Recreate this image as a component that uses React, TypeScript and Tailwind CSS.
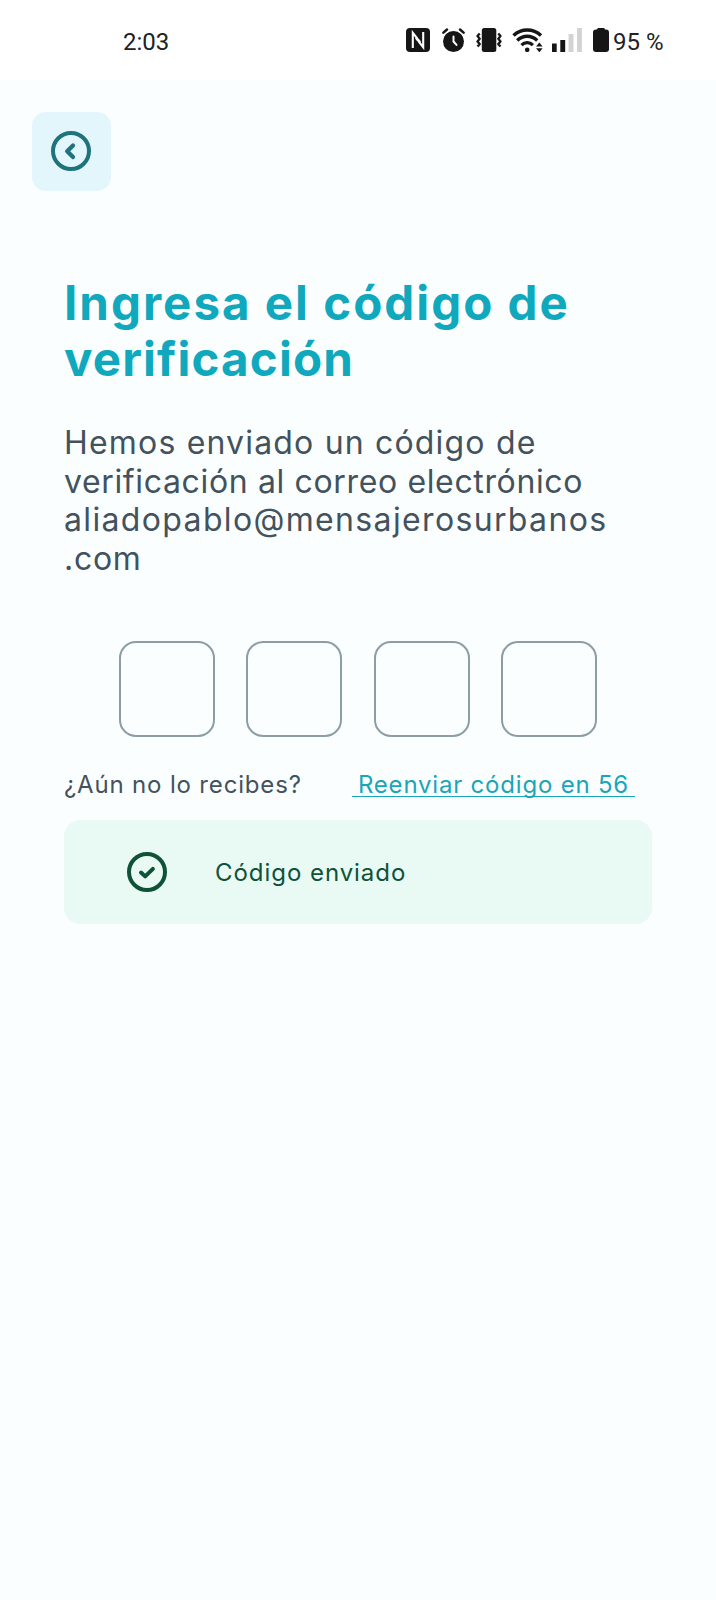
import { useState } from 'react'

const titleLines = [
  { text: 'Ingresa el código de', className: 'tracking-[2px]' },
  { text: 'verificación', className: 'tracking-[1.15px]' },
]

const messageLines = [
  { text: 'Hemos enviado un código de', className: 'tracking-[1.18px]' },
  { text: 'verificación al correo electrónico', className: 'tracking-[0.64px]' },
  { text: 'aliadopablo@mensajerosurbanos', className: 'tracking-[1.35px]' },
  { text: '.com', className: 'tracking-[0.7px]' },
]

function NfcIcon() {
  return (
    <svg className="w-6 h-6" viewBox="0 0 24 24" fill="none">
      <rect width="24" height="24" rx="4" fill="#161616" />
      <path d="M6.800 20V4.800l7.400 9.400" stroke="#fff" strokeWidth="2.100" />
      <path d="M17.200 4v15.200l-7.400-9.400" stroke="#fff" strokeWidth="2.100" />
      <path d="M13.500 4v6.500M10.500 20v-6.500" stroke="#161616" strokeWidth="2.300" />
    </svg>
  )
}

function AlarmIcon() {
  return (
    <svg className="w-6 h-6 ml-3" viewBox="0 0 24 24" fill="none" strokeLinecap="round">
      <circle cx="11.500" cy="13.500" r="10.500" fill="#161616" />
      <path d="M1.400 4.600 5 1.500M18 1.500l3.600 3.100" stroke="#161616" strokeWidth="2.500" />
      <path d="M11.500 8.500v5l3 3.400" stroke="#fff" strokeWidth="2" />
    </svg>
  )
}

function VibrateIcon() {
  return (
    <svg className="w-[26px] h-6 ml-[10px]" viewBox="0 0 26 24" fill="none" strokeLinejoin="round">
      <rect x="5.800" y="0" width="14.500" height="24" rx="2.500" fill="#161616" />
      <path
        d="M3.700 5.500 1.500 8l2.200 2.700-2.200 2.700 2.200 2.700-2.200 2.400M22.300 5.500 24.500 8l-2.200 2.700 2.200 2.700-2.200 2.700 2.200 2.400"
        stroke="#161616"
        strokeWidth="2.300"
      />
    </svg>
  )
}

function WifiIcon() {
  return (
    <svg className="w-8 h-6 ml-[10px]" viewBox="0 0 32 24" fill="none">
      <path d="M1.500 7.500c8-7.300 19.500-7.300 27.500 0" stroke="#161616" strokeWidth="3.400" />
      <path d="M5.200 12.500c6-5.600 14-5.600 20 0" stroke="#161616" strokeWidth="3.400" />
      <path d="M9.500 17.200c3.300-3.500 8.100-3.500 11.400 0" stroke="#161616" strokeWidth="3.200" />
      <circle cx="15.200" cy="21.800" r="2.300" fill="#161616" />
      <path d="M24 18.400 27.300 14.400l3.300 4zM24 20.300h6.600l-3.300 4z" fill="#161616" />
    </svg>
  )
}

function SignalIcon() {
  return (
    <svg className="w-[30px] h-6 ml-2" viewBox="0 0 30 24">
      <rect x="0" y="15.500" width="4.700" height="8.500" fill="#161616" />
      <rect x="8.300" y="12" width="4.900" height="12" fill="#161616" />
      <rect x="16.600" y="6" width="4.900" height="18" fill="#d3d3d3" />
      <rect x="25" y="0" width="4.900" height="24" fill="#d3d3d3" />
    </svg>
  )
}

function BatteryIcon() {
  return (
    <svg className="w-4 h-6 ml-[11px]" viewBox="0 0 16 24">
      <rect x="4" y="0" width="8" height="4" rx="1.500" fill="#161616" />
      <rect x="0" y="1.500" width="16" height="22.500" rx="3" fill="#161616" />
    </svg>
  )
}

function StatusBar() {
  return (
    <header className="flex h-20 items-center bg-white pl-[123px] font-['Roboto',sans-serif] text-2xl leading-8 text-[#222]">
      <span className="w-[283px] pt-[3px]">2:03</span>
      <NfcIcon />
      <AlarmIcon />
      <VibrateIcon />
      <WifiIcon />
      <SignalIcon />
      <BatteryIcon />
      <span className="ml-[4px] pt-[3px] whitespace-nowrap">95 %</span>
    </header>
  )
}

export default function App() {
  const [code, setCode] = useState(['', '', '', ''])

  function handleChange(index: number, value: string) {
    setCode(code.map((digit, i) => (i === index ? value.replace(/\D/g, '') : digit)))
  }

  return (
    <div className="min-h-[1600px] w-[716px] bg-[#fbfeff] font-['Inter',sans-serif] text-[#43525c]">
      <StatusBar />

      <div className="px-8 pt-8">
        <button aria-label="Volver" className="flex size-[79px] items-center justify-center rounded-[14px] bg-[#e3f6fb] pr-px pb-px">
          <svg className="size-10" viewBox="0 0 40 40" fill="none" stroke="#1f737d" strokeLinecap="round" strokeLinejoin="round">
            <circle cx="20" cy="20" r="18" strokeWidth="4" />
            <path d="m22 14.500-5.800 5.800 5.800 5.800" strokeWidth="4.300" />
          </svg>
        </button>
      </div>

      <main className="px-16 pt-[84px]">
        <h1 className="text-[47.5px] leading-[56px] font-bold text-[#10a8bd]">
          {titleLines.map(line => (
            <span key={line.text} className={`block whitespace-nowrap ${line.className}`}>{line.text}</span>
          ))}
        </h1>

        <p className="mt-[37px] text-[32px] leading-[38.5px]">
          {messageLines.map(line => (
            <span key={line.text} className={`block whitespace-nowrap ${line.className}`}>{line.text}</span>
          ))}
        </p>

        <div className="mt-[63px] flex justify-center gap-[31.5px]">
          {code.map((digit, i) => (
            <input
              key={i}
              value={digit}
              onChange={e => handleChange(i, e.target.value)}
              maxLength={1}
              inputMode="numeric"
              aria-label={`Dígito ${i + 1}`}
              className="size-24 rounded-[17px] border-2 border-[#8c9da5] text-center text-4xl outline-none"
            />
          ))}
        </div>

        <div className="mt-8 flex text-2xl leading-8 whitespace-nowrap">
          <span className="w-[288px] tracking-[0.83px]">¿Aún no lo recibes?</span>
          <button className="relative w-[283px] text-center text-[#1ba5b8] tracking-[0.8px]">
            Reenviar código en 56
            <span className="absolute left-0 top-[27px] h-px w-full bg-[#1ba5b8]" />
          </button>
        </div>

        {/* Confirmation banner */}
        <div className="mt-[19px] flex h-[103.5px] items-center rounded-2xl bg-[#e9faf4] pl-[63px] text-2xl text-[#0f5237]">
          <svg className="size-10" viewBox="0 0 40 40" fill="none" stroke="#0f5237" strokeLinecap="round" strokeLinejoin="round">
            <circle cx="20" cy="20" r="18" strokeWidth="4" />
            <path d="m14 20.500 4.200 3.900 7.700-7.600" strokeWidth="4" />
          </svg>
          <span className="ml-[48px] pt-[3px] tracking-[0.95px]">Código enviado</span>
        </div>
      </main>
    </div>
  )
}
